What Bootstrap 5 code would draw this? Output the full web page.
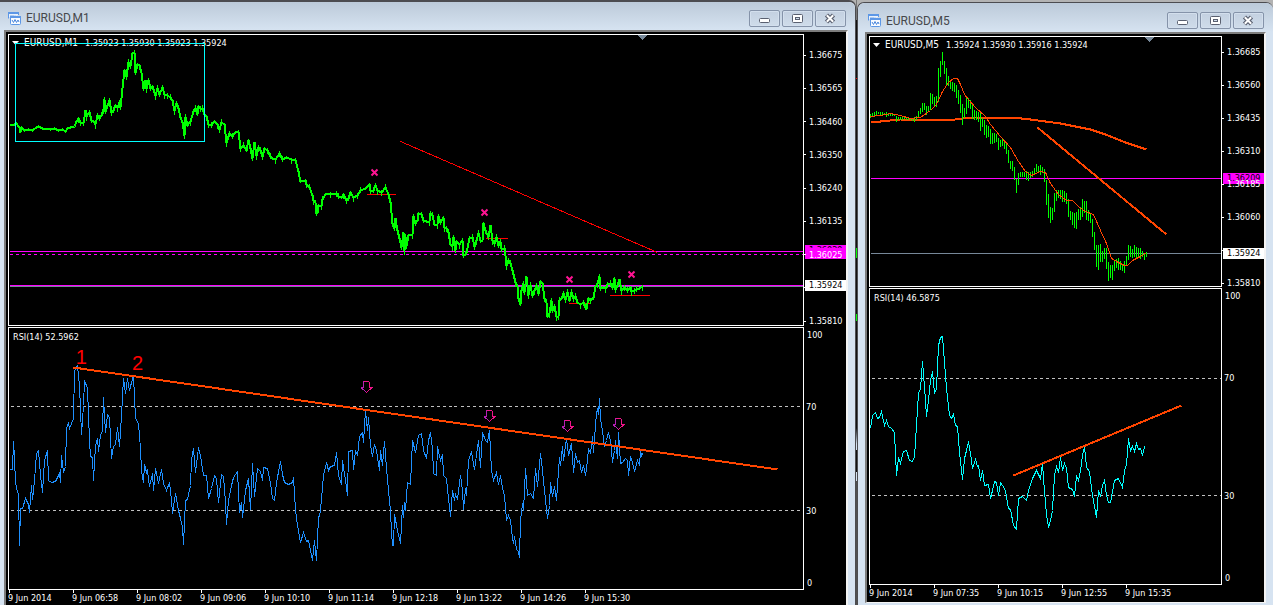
<!DOCTYPE html>
<html lang="en">
<head>
<meta charset="utf-8">
<meta name="viewport" content="width=device-width, initial-scale=1">
<title>EURUSD charts</title>
<link href="https://cdn.jsdelivr.net/npm/bootstrap@5.3.0/dist/css/bootstrap.min.css" rel="stylesheet">
<style>
  body { background: #b3b3b3; font: 9px/10px "DejaVu Sans Condensed", "Noto Sans", sans-serif; color: #fff; }
  .workspace { min-height: 100vh; grid-template-columns: minmax(0, 856fr) 1px minmax(0, 416fr); }
  .win { --frame: #d6e3f1; background: var(--frame); min-width: 0; border-color: #4c4c50; border-style: solid; }
  .win-m1 { padding: 0 7px 0 4px; border-width: 2px 1px 0 0; border-radius: 0 7px 0 0; }
  .win-m5 { margin-top: 2px; padding: 0 7px 2px 7px; border-width: 1px 0 0 1px; border-radius: 7px 7px 0 0; }
  .gutter { width: 1px; background: linear-gradient(#777 0 20px, #111 20px 78px, #e00 78px 79px, #111 79px 248px, #0f0 248px 258px, #111 258px 314px, #0f0 314px 321px, #111 321px 428px, #d6e3f1 444px 450px, #111 450px 472px, #d6e3f1 472px 481px, #505050 481px); }
  .title-row { height: 28px; margin: 0 -7px 0 -4px; padding: 4px 9px 0 7px; background: linear-gradient(#bccad9, #d6e3f1); border-radius: inherit; }
  .win-m5 .title-row { height: 29px; margin: 0 -7px; padding-top: 6px; padding-left: 9px; }
  .win-name { font: 12px/16px Roboto, sans-serif; color: #46484c; }
  .win-btn { width: 31px; height: 17px; padding: 0; border: 1px solid #8593a9; border-radius: 2px; background: linear-gradient(#c3d0e0, #cfdcea); box-shadow: inset 0 0 0 1px #d3dfed; line-height: 0; }
  .client { background: #000; border: 2px solid; border-color: #7d7d7d #f4f4f4 #f4f4f4 #7d7d7d; border-bottom-width: 0; padding: 2px 0 0 2px; }
  .win-m5 .client { border-bottom-width: 1px; }
  .pane-row { min-height: 0; }
  .plot { border: 1px solid #fff; min-width: 0; }
  .plot > svg { position: absolute; inset: 0; width: 100%; height: 100%; shape-rendering: crispEdges; }
  .plot path, .plot polyline, .plot line, .plot rect { fill: none; vector-effect: non-scaling-stroke; }
  .plot .solid { fill: currentColor; }
  .quote { padding: 3px 0 0 3px; gap: 5px; white-space: pre; }
  .symbol { font-size: 10px; margin-right: 2px; }
  .rsi-name { padding: 4px 0 0 4px; }
  .wave-no { position: absolute; font: 20px/20px "Liberation Sans", sans-serif; color: #f00; }
  .scale { width: 42px; flex: none; position: relative; }
  .prices { padding-top: 16px; }
  .win-m5 .prices { padding-top: 11px; margin-bottom: -1px; }
  .prices span { position: relative; z-index: 1; display: flex; align-items: center; gap: 3px; min-height: 10px; }
  .prices span::before { content: ""; width: 2px; height: 1px; background: #fff; }
  .tag { position: absolute; left: 1px; right: 0; height: 11px; padding-left: 4px; line-height: 11px; color: #000; }
  .tag-line { background: #f0f; }
  .tag-bid { background: #fff; z-index: 2; }
  .levels { display: grid; grid-template-rows: 30fr 40fr 30fr; padding: 2px 0 1px 2px; }
  .levels span { grid-column: 1; line-height: 12px; }
  .lv100 { grid-row: 1; padding-left: 1px; }
  .lv70 { grid-row: 2; margin-top: -6px; }
  .lv30 { grid-row: 3; margin-top: -6px; }
  .lv0 { grid-row: 3; align-self: end; padding-left: 1px; }
  .times { height: 15px; overflow: hidden; }
  .win-m5 .times { height: 17px; }
  .times span { width: 64px; flex: none; white-space: nowrap; }
  .times span::before { content: ""; display: block; width: 1px; height: 3px; margin-left: 1px; background: #fff; }
</style>
</head>
<body>
<svg width="0" height="0" class="position-absolute" aria-hidden="true">
  <defs>
    <g id="chart-icon">
      <path d="M1.500 7.500V1.500H11.500V4" fill="#eaf2fc" stroke="#5c97e6"/>
      <path d="M1 2H12" stroke="#5c97e6" stroke-width="2"/>
      <path d="M3 6.500l1-2 1 2 1-2 1 2 1-2" fill="none" stroke="#5c97e6"/>
      <rect x="3.500" y="5.500" width="10" height="8" rx="1" fill="#f8fbff" stroke="#5c97e6"/>
      <path d="M3 6H14" stroke="#5c97e6" stroke-width="2"/>
      <path d="M5 9l1.500 2.500L8 8.500l1.500 3L11 9l1 2" fill="none" stroke="#4a86dc"/>
    </g>
    <g id="i-min"><rect x="10.500" y="8.500" width="10" height="4" rx="1" fill="#fff" stroke="#5a6070"/></g>
    <g id="i-max"><rect x="10.500" y="4.500" width="10" height="8" rx="1" fill="#fff" stroke="#5a6070"/><rect x="13.500" y="7.500" width="4" height="2" fill="#cfdcea" stroke="#5a6070"/></g>
    <g id="i-close"><path d="M11.500 5l7 7M18.500 5l-7 7" stroke="#5a6070" stroke-width="4.500"/><path d="M11.800 5.300l6.400 6.400M18.200 5.300l-6.400 6.400" stroke="#fff" stroke-width="2"/></g>
    <g id="xmark" shape-rendering="geometricPrecision"><path d="M-3-3L3 3M3-3L-3 3" stroke="#ff1493" stroke-width="2"/></g>
    <g id="sell"><path d="M-3-5.500V1M-5.500 1H-2.500M-5 1.500L0 6" stroke="#b420b4"/><path d="M-3-5.500H2.500M2.500-5V1H5.500L0 6" stroke="#f0148a"/></g>
  </defs>
</svg>

<main class="workspace d-grid">
  <section class="win win-m1 d-flex flex-column" aria-label="EURUSD M1">
    <header class="title-row d-flex align-items-center gap-1">
      <svg width="15" height="15"><use href="#chart-icon"/></svg>
      <span class="win-name flex-grow-1">EURUSD,M1</span>
      <div class="d-flex" style="gap:2px">
        <button type="button" class="win-btn" aria-label="Minimize"><svg width="29" height="15" viewBox="1 1 29 15"><use href="#i-min"/></svg></button>
        <button type="button" class="win-btn" aria-label="Maximize"><svg width="29" height="15" viewBox="1 1 29 15"><use href="#i-max"/></svg></button>
        <button type="button" class="win-btn" aria-label="Close"><svg width="29" height="15" viewBox="1 1 29 15"><use href="#i-close"/></svg></button>
      </div>
    </header>
    <div class="client flex-grow-1 d-flex flex-column">
      <div class="pane-row d-flex" style="flex:292 1 0">
        <div class="plot flex-grow-1 position-relative">
          <div class="quote d-flex align-items-center"><svg width="7" height="4"><path class="solid" d="M0 0H7L3.500 4Z"/></svg><span class="symbol">EURUSD,M1</span><span>1.35923 1.35930 1.35923 1.35924</span></div>
          <svg viewBox="9 35 794 290" preserveAspectRatio="none">
            <path class="solid" color="#778899" d="M638 35H647L642.500 40Z"/>
            <g transform="translate(.5 .5)">
              <path d="M9 251H803M9 285H803" stroke="#f0f"/>
              <path d="M9 254H803" stroke="#f0f" stroke-dasharray="3 3"/>
              <path d="M9 286H803" stroke="#778899"/>
              <path d="M366 194H395M485 238H507M568 303H590M609 295H649M400 141L657 252" stroke="#f00"/>
              <polyline stroke="#0f0" stroke-width="2" points="9,124 14,124 16,123 19,127 20,132 21,127 24,130 28,129 32,130 36,127 38,126 42,128 47,128 50,129 54,128 58,130 62,129 65,131 67,128 70,127 74,126 76,121 78,118 80,122 83,123 85,110 86,116 89,112 91,120 93,121 95,124 97,115 99,118 101,115 103,109 104,99 105,111 107,105 109,100 111,112 113,110 115,105 117,107 119,102 120,107 122,88 124,70 126,76 128,62 130,66 132,53 134,52 135,72 137,64 139,65 141,72 143,88 145,80 146,88 148,80 150,88 152,86 155,95 157,88 159,94 162,87 164,94 167,95 170,97 172,100 174,110 176,103 178,108 180,117 182,122 184,135 185,117 187,125 190,121 193,111 195,108 197,114 198,106 200,108 202,108 204,114 206,116 208,124 211,125 214,121 217,124 219,129 221,122 224,124 226,142 229,133 232,136 235,132 238,131 240,148 243,145 246,150 248,140 250,148 252,158 254,142 256,155 258,147 260,150 262,156 264,148 267,150 270,156 272,158 275,159 279,153 282,159 286,157 291,159 295,160 298,171 300,181 305,180 306,184 309,187 312,195 313,200 315,202 316,213 317,212 318,205 321,206 322,199 325,194 330,193 336,193 338,196 341,197 343,194 346,200 348,198 350,192 353,197 357,195 360,190 365,188 369,184 370,190 373,190 375,185 377,190 381,192 385,187 388,194 390,202 392,223 394,228 395,218 397,230 399,238 401,247 403,232 404,250 405,236 406,246 408,235 412,234 413,216 415,223 417,220 418,213 421,214 423,220 426,221 429,221 430,213 432,215 434,224 437,224 438,216 440,222 443,217 444,227 446,228 448,232 450,244 452,246 453,237 455,250 456,241 459,244 462,240 463,255 465,254 467,248 469,238 472,237 474,246 476,240 478,233 480,240 482,240 483,223 485,230 488,237 490,225 492,240 494,243 496,237 498,245 500,241 501,248 504,248 505,255 506,265 508,260 510,263 512,270 515,282 517,286 518,298 520,304 521,290 523,283 524,292 526,276 527,284 528,295 530,285 532,295 534,290 536,285 538,293 540,281 542,283 544,298 546,302 547,316 549,313 551,300 552,310 554,306 556,316 558,316 559,300 561,298 563,293 565,299 567,292 569,300 571,292 573,298 575,296 577,302 580,304 583,302 585,307 586,308 588,298 590,300 593,297 595,286 597,283 599,276 600,288 602,287 605,288 607,284 610,283 612,287 614,278 615,289 617,285 619,279 621,290 624,287 627,290 630,287 631,291 634,290 636,289 639,288 642,286"/>
              <path id="wicks" stroke="#0f0"/>
              <rect x="15" y="43" width="189" height="98" stroke="#0ff"/>
              <use href="#xmark" x="374" y="172"/><use href="#xmark" x="484" y="212"/><use href="#xmark" x="569" y="279"/><use href="#xmark" x="631" y="274"/>
            </g>
          </svg>
        </div>
        <div class="scale prices d-flex flex-column justify-content-between">
          <span>1.36675</span><span>1.36565</span><span>1.36460</span><span>1.36350</span><span>1.36240</span><span>1.36135</span><span>1.36025</span><span></span><span>1.35810</span>
          <div class="tag tag-line" style="top:72.3%">1.36029</div>
          <div class="tag tag-line" style="top:73.3%"></div>
          <div class="tag tag-bid" style="top:84.3%">1.35924</div>
        </div>
      </div>
      <div class="pane-row d-flex" style="flex:263 1 0;margin-top:1px">
        <div class="plot flex-grow-1 position-relative">
          <div class="rsi-name">RSI(14) 52.5962</div>
          <svg viewBox="9 328 794 261" preserveAspectRatio="none">
            <g transform="translate(.5 .5)">
              <path d="M10 406H803M10 510H803" stroke="#c0c0c0" stroke-dasharray="3 3"/>
              <polyline stroke="#1e90ff" points="9,469 12,469 13,441 14,458 15,482 17,492 18,493 19,545 20,508 22,508 25,498 28,504 29,512 31,485 32,499 34,480 36,453 38,450 40,475 42,492 44,460 47,450 48,480 51,482 55,481 59,473 60,482 61,455 63,472 65,466 66,428 68,422 69,428 73,418 74,370 77,365 79,385 81,434 83,405 84,380 87,388 89,440 90,456 92,457 93,480 95,445 97,438 98,451 100,435 102,430 103,397 105,432 107,414 109,417 111,458 113,446 115,444 117,427 119,446 121,415 123,378 125,393 127,378 129,390 131,382 133,375 135,418 138,423 140,448 141,470 143,482 144,464 146,472 147,470 149,486 152,473 153,490 155,468 158,483 161,469 163,483 166,490 169,482 171,500 172,513 175,493 178,510 180,518 182,527 183,544 185,500 187,499 190,485 191,460 193,448 195,472 198,447 200,455 203,475 206,475 208,498 211,488 214,475 216,478 218,502 221,474 223,476 225,502 226,524 228,500 231,485 233,477 237,471 239,512 241,502 242,517 245,490 248,478 250,509 252,463 254,496 257,468 260,471 262,480 263,467 267,468 270,483 272,498 274,500 276,482 280,461 282,474 284,482 288,484 292,482 293,477 295,510 297,525 300,542 303,532 306,541 308,540 310,550 312,560 314,540 316,560 318,517 319,515 320,510 323,475 326,462 328,470 330,466 334,465 336,452 338,475 341,484 342,460 345,480 347,495 348,451 352,450 353,469 355,450 357,455 359,436 362,432 363,442 365,410 367,430 368,417 370,445 372,456 374,444 376,450 379,470 380,450 382,465 384,441 386,468 388,490 390,510 391,532 392,545 393,545 394,514 397,530 400,543 402,505 403,517 404,502 405,510 407,482 410,484 412,440 415,452 418,435 421,433 423,450 426,458 428,440 430,432 432,448 433,473 436,475 437,446 440,460 442,454 443,475 446,478 448,498 450,516 452,490 454,500 455,494 457,499 460,475 462,490 463,509 465,488 466,495 468,460 471,451 474,469 478,440 480,467 482,432 485,440 487,442 489,430 491,470 493,480 496,472 498,484 500,475 502,487 504,495 506,520 508,515 510,520 512,538 513,543 514,536 516,549 518,551 519,557 520,520 522,503 523,510 525,468 527,495 530,493 533,498 535,468 537,486 540,453 542,470 544,490 547,518 549,505 550,482 552,496 554,486 556,500 558,470 559,457 560,465 562,446 563,460 566,438 568,455 571,443 573,472 575,453 577,462 579,460 581,472 583,465 585,475 587,460 588,448 590,453 592,436 593,452 595,425 596,412 597,409 598,414 599,398 600,419 602,430 604,446 606,440 608,432 610,440 612,462 614,450 615,440 617,458 618,432 620,463 622,462 625,458 627,460 628,475 630,456 632,462 634,471 637,460 639,465 640,450 641,455 642,453"/>
              <path d="M73 367L777 469" stroke="#ff4500" stroke-width="2"/>
              <use href="#sell" x="366" y="386"/><use href="#sell" x="489" y="415"/><use href="#sell" x="567" y="425"/><use href="#sell" x="618" y="423"/>
            </g>
          </svg>
          <span class="wave-no" style="left:8.4%;top:7.3%">1</span>
          <span class="wave-no" style="left:15.500%;top:9.6%">2</span>
        </div>
        <div class="scale levels"><span class="lv100">100</span><span class="lv70">70</span><span class="lv30">30</span><span class="lv0">0</span></div>
      </div>
      <div class="times d-flex"><span>9 Jun 2014</span><span>9 Jun 06:58</span><span>9 Jun 08:02</span><span>9 Jun 09:06</span><span>9 Jun 10:10</span><span>9 Jun 11:14</span><span>9 Jun 12:18</span><span>9 Jun 13:22</span><span>9 Jun 14:26</span><span>9 Jun 15:30</span></div>
    </div>
  </section>

  <div class="gutter"></div>

  <section class="win win-m5 d-flex flex-column" aria-label="EURUSD M5">
    <header class="title-row d-flex align-items-center gap-1">
      <svg width="15" height="15"><use href="#chart-icon"/></svg>
      <span class="win-name flex-grow-1">EURUSD,M5</span>
      <div class="d-flex" style="gap:2px">
        <button type="button" class="win-btn" aria-label="Minimize"><svg width="29" height="15" viewBox="1 1 29 15"><use href="#i-min"/></svg></button>
        <button type="button" class="win-btn" aria-label="Maximize"><svg width="29" height="15" viewBox="1 1 29 15"><use href="#i-max"/></svg></button>
        <button type="button" class="win-btn" aria-label="Close"><svg width="29" height="15" viewBox="1 1 29 15"><use href="#i-close"/></svg></button>
      </div>
    </header>
    <div class="client flex-grow-1 d-flex flex-column">
      <div class="pane-row d-flex" style="flex:251 1 0">
        <div class="plot flex-grow-1 position-relative">
          <div class="quote d-flex align-items-center"><svg width="7" height="4"><path class="solid" d="M0 0H7L3.500 4Z"/></svg><span class="symbol">EURUSD,M5</span><span>1.35924 1.35930 1.35916 1.35924</span></div>
          <svg viewBox="870 37 351 249" preserveAspectRatio="none">
            <path class="solid" color="#778899" d="M1145 37H1154L1149.500 42Z"/>
            <g transform="translate(.5 .5)">
              <path d="M870 178H1221" stroke="#f0f"/>
              <path d="M870 253H1221" stroke="#778899"/>
              <polyline stroke="#ff4500" stroke-width="2" points="870,121 880,121 890,120 900,119 910,119 925,119 940,120 955,119 962,118 975,117 1012,117 1030,119 1045,121 1060,123 1075,126 1090,129 1105,134 1125,142 1146,149"/>
              <path id="bars" stroke="#0f0"/>
              <polyline stroke="#ff4500" points="870,116 880,115 890,113 900,115 910,118 920,117 930,110 936,104 942,91 948,82 953,78 957,78 960,84 964,94 968,99 975,107 985,116 990,124 1000,136 1010,147 1018,161 1025,171 1031,175 1040,171 1045,172 1050,183 1058,194 1066,200 1072,200 1079,207 1085,211 1093,214 1100,230 1106,243 1111,258 1118,262 1124,265 1127,265 1132,260 1140,256 1146,252"/>
              <path d="M1037 127L1166 234" stroke="#ff4500" stroke-width="2"/>
            </g>
          </svg>
        </div>
        <div class="scale prices d-flex flex-column justify-content-between">
          <span>1.36685</span><span>1.36560</span><span>1.36435</span><span>1.36310</span><span>1.36185</span><span>1.36060</span><span></span><span>1.35810</span>
          <div class="tag tag-line" style="top:54.2%">1.36209</div>
          <div class="tag tag-bid" style="top:84%">1.35924</div>
        </div>
      </div>
      <div class="pane-row d-flex" style="flex:297 1 0;margin-top:1px">
        <div class="plot flex-grow-1 position-relative">
          <div class="rsi-name">RSI(14) 46.5875</div>
          <svg viewBox="870 289 351 295" preserveAspectRatio="none">
            <g transform="translate(.5 .5)">
              <path d="M871 378H1221M871 495H1221" stroke="#c0c0c0" stroke-dasharray="3 3"/>
              <polyline stroke="#0ff" points="870,428 872,415 875,412 877,418 879,417 881,411 884,425 886,420 888,426 891,428 894,432 896,475 898,457 900,463 903,451 906,450 909,460 912,461 914,456 916,425 918,393 920,388 922,361 925,400 926,416 928,400 930,380 932,371 934,393 936,388 938,345 940,337 942,336 944,362 946,388 949,415 951,418 953,414 955,425 957,426 959,452 962,479 964,458 966,450 968,441 971,460 972,468 975,459 977,466 978,465 980,480 982,470 984,485 988,484 990,498 992,490 994,481 996,482 998,495 1000,482 1002,485 1005,490 1008,508 1010,509 1013,525 1016,529 1018,498 1022,496 1026,500 1028,490 1032,478 1036,470 1040,478 1042,463 1044,491 1046,514 1048,527 1051,516 1052,510 1054,475 1056,466 1058,472 1060,457 1062,470 1064,463 1066,468 1068,487 1072,489 1074,496 1076,475 1078,480 1080,470 1082,455 1084,446 1086,467 1089,471 1092,495 1096,517 1098,490 1100,496 1102,485 1104,480 1106,495 1108,502 1110,502 1114,480 1118,478 1122,487 1124,470 1126,464 1128,438 1130,450 1132,446 1134,451 1136,443 1138,449 1140,448 1142,455 1144,446 1145,447"/>
              <path d="M1013 475L1181 405" stroke="#ff4500" stroke-width="2"/>
            </g>
          </svg>
        </div>
        <div class="scale levels"><span class="lv100">100</span><span class="lv70">70</span><span class="lv30">30</span><span class="lv0">0</span></div>
      </div>
      <div class="times d-flex"><span>9 Jun 2014</span><span>9 Jun 07:35</span><span>9 Jun 10:15</span><span>9 Jun 12:55</span><span>9 Jun 15:35</span></div>
    </div>
  </section>
</main>
<script src="https://cdn.jsdelivr.net/npm/bootstrap@5.3.0/dist/js/bootstrap.bundle.min.js"></script>
<script>
  // High and low of each five-minute bar, two units apart from x = 870.
  const bars = "113-117 112-115 111-115 110-114 111-113 111-114 111-114 112-114 111-116 112-115 113-115 113-115 113-115 115-121 116-119 116-119 116-119 116-118 116-119 117-119 117-119 117-120 116-121 115-119 110-116 107-113 102-111 102-109 105-114 105-111 92-109 93-103 96-105 95-106 67-101 60-76 51-64 60-73 67-85 75-85 81-88 81-90 82-91 84-97 89-103 94-112 103-124 107-117 97-113 97-107 99-108 103-118 109-119 110-119 111-121 112-130 117-126 119-134 124-137 125-136 128-143 132-143 132-142 133-141 137-149 139-146 137-145 141-148 142-153 149-162 160-168 160-170 166-179 178-192 172-184 171-176 171-176 171-176 170-179 171-180 171-177 170-176 167-174 163-171 165-172 164-174 166-172 168-181 179-204 193-217 206-222 207-219 192-211 189-200 189-197 189-198 189-201 190-201 192-203 198-216 210-219 211-224 212-227 211-228 208-219 206-219 198-216 200-212 200-219 209-220 213-222 218-236 231-249 244-266 244-269 243-261 250-261 247-258 247-268 261-280 264-277 264-279 260-270 258-267 257-269 260-269 264-270 260-272 255-265 244-259 245-256 248-257 244-256 246-257 247-257 247-258 250-256 252-259 251-256";
  document.getElementById("bars").setAttribute("d", bars.split(" ").map((b, i) => {
    const [hi, lo] = b.split("-");
    return `M${870 + i * 2} ${hi}V${lo}`;
  }).join(""));

  // Short wicks of the one-minute bars, spread around the closing line.
  const closes = [...document.querySelector("#wicks").previousElementSibling.points];
  document.getElementById("wicks").setAttribute("d", closes.filter(p => p.x > 75).map((p, i) =>
    `M${p.x} ${p.y - 1 - i * 5 % 4}V${p.y + 1 + i * 3 % 4}`
  ).join(""));
</script>
</body>
</html>
